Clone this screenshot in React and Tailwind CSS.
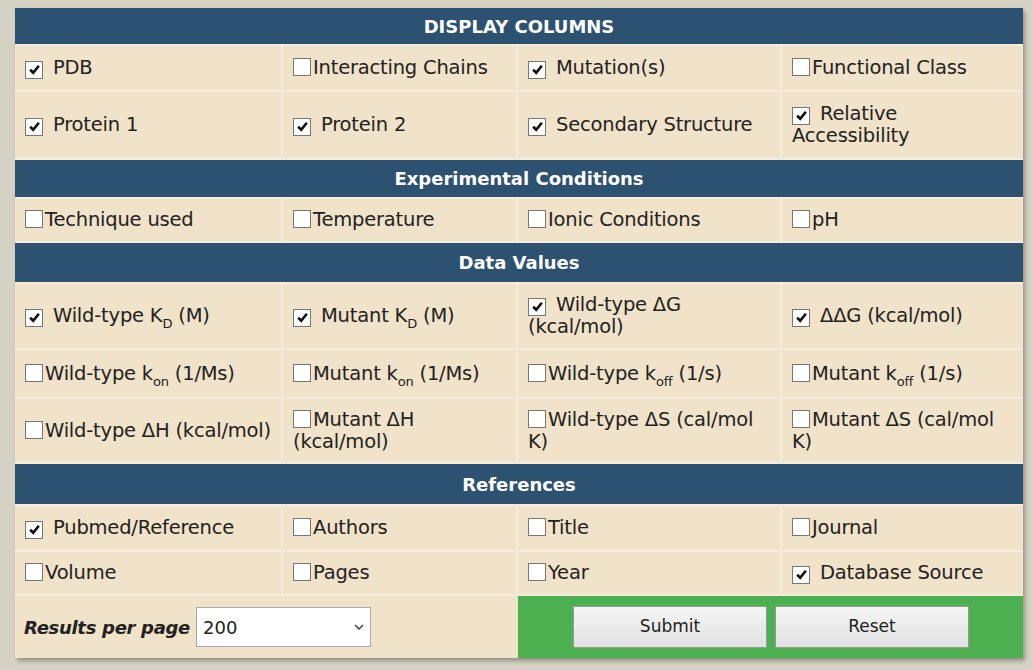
const Box = ({ on }) => (
  <span className="inline-flex h-[18px] w-[18px] shrink-0 items-center justify-center border border-[#777] bg-white align-[-2px] mr-[2px]">
    {on ? (
      <svg viewBox="0 0 12 12" className="h-[13px] w-[13px]">
        <path d="M2 6.2 L4.8 9 L10 2.5" fill="none" stroke="#111" strokeWidth="2.4" />
      </svg>
    ) : null}
  </span>
);

const Cell = ({ on, children }) => (
  <div className="bg-[#f0e3c9] px-[10px] flex items-center leading-[22px] tracking-[-0.2px]">
    <div>
      <Box on={on} />
      {on ? <span className="ml-[8px]" /> : null}
      {children}
    </div>
  </div>
);

const Head = ({ children, h }) => (
  <div className="bg-[#2c5171] text-white font-bold flex items-center justify-center border-b-2 border-[#f5ecdc] text-[18px]" style={{ height: h }}>
    {children}
  </div>
);

const Row = ({ h, items }) => (
  <div className="grid grid-cols-[266px_233px_262px_1fr] gap-[2px] border-b-2 border-[#f5ecdc] bg-[#f5ecdc]" style={{ height: h }}>
    {items.map((it, i) => (
      <Cell key={i} on={it[0]}>
        {it[1]}
      </Cell>
    ))}
  </div>
);

const sub = (t) => <sub className="text-[13px] align-[-3px]">{t}</sub>;

export default function App() {
  return (
    <div className="w-[1033px] h-[670px] bg-[#d5d2c3] pt-[8px] px-[15px] text-[19.5px] text-[#222]" style={{ fontFamily: '"DejaVu Sans", Verdana, sans-serif' }}>
      <div className="w-[1008px] bg-[#f5ecdc] shadow-[2px_3px_4px_rgba(0,0,0,0.3)]">
        <Head h={38}>DISPLAY COLUMNS</Head>
        <Row h={46} items={[[1, 'PDB'], [0, 'Interacting Chains'], [1, 'Mutation(s)'], [0, 'Functional Class']]} />
        <Row h={68} items={[[1, 'Protein 1'], [1, 'Protein 2'], [1, 'Secondary Structure'], [1, 'Relative Accessibility']]} />
        <Head h={39}>Experimental Conditions</Head>
        <Row h={44} items={[[0, 'Technique used'], [0, 'Temperature'], [0, 'Ionic Conditions'], [0, 'pH']]} />
        <Head h={41}>Data Values</Head>
        <Row h={66} items={[[1, <>Wild-type K{sub('D')} (M)</>], [1, <>Mutant K{sub('D')} (M)</>], [1, 'Wild-type ΔG (kcal/mol)'], [1, 'ΔΔG (kcal/mol)']]} />
        <Row h={49} items={[[0, <>Wild-type k{sub('on')} (1/Ms)</>], [0, <>Mutant k{sub('on')} (1/Ms)</>], [0, <>Wild-type k{sub('off')} (1/s)</>], [0, <>Mutant k{sub('off')} (1/s)</>]]} />
        <Row h={65} items={[[0, 'Wild-type ΔH (kcal/mol)'], [0, 'Mutant ΔH (kcal/mol)'], [0, 'Wild-type ΔS (cal/mol K)'], [0, 'Mutant ΔS (cal/mol K)']]} />
        <Head h={42}>References</Head>
        <Row h={46} items={[[1, 'Pubmed/Reference'], [0, 'Authors'], [0, 'Title'], [0, 'Journal']]} />
        <Row h={44} items={[[0, 'Volume'], [0, 'Pages'], [0, 'Year'], [1, 'Database Source']]} />
        <div className="grid grid-cols-[503px_1fr] h-[62px]">
          <div className="bg-[#f0e3c9] flex items-center px-[9px] gap-[6px]">
            <span className="font-bold italic text-[18px] tracking-[-0.3px]">Results per page</span>
            <div className="w-[175px] h-[40px] bg-white border border-[#aaa] flex items-center justify-between px-[6px] text-[18px]">
              <span>200</span>
              <svg viewBox="0 0 10 6" className="w-[10px] h-[6px]"><path d="M1 1 L5 5 L9 1" fill="none" stroke="#444" strokeWidth="1.5" /></svg>
            </div>
          </div>
          <div className="bg-[#4caf50] flex items-center pl-[55px] gap-[8px]">
            {['Submit', 'Reset'].map((t) => (
              <button key={t} className="w-[194px] h-[42px] bg-gradient-to-b from-[#f6f6f6] to-[#e0e0e0] border border-[#999] text-[17px] text-[#222]">
                {t}
              </button>
            ))}
          </div>
        </div>
      </div>
    </div>
  );
}
